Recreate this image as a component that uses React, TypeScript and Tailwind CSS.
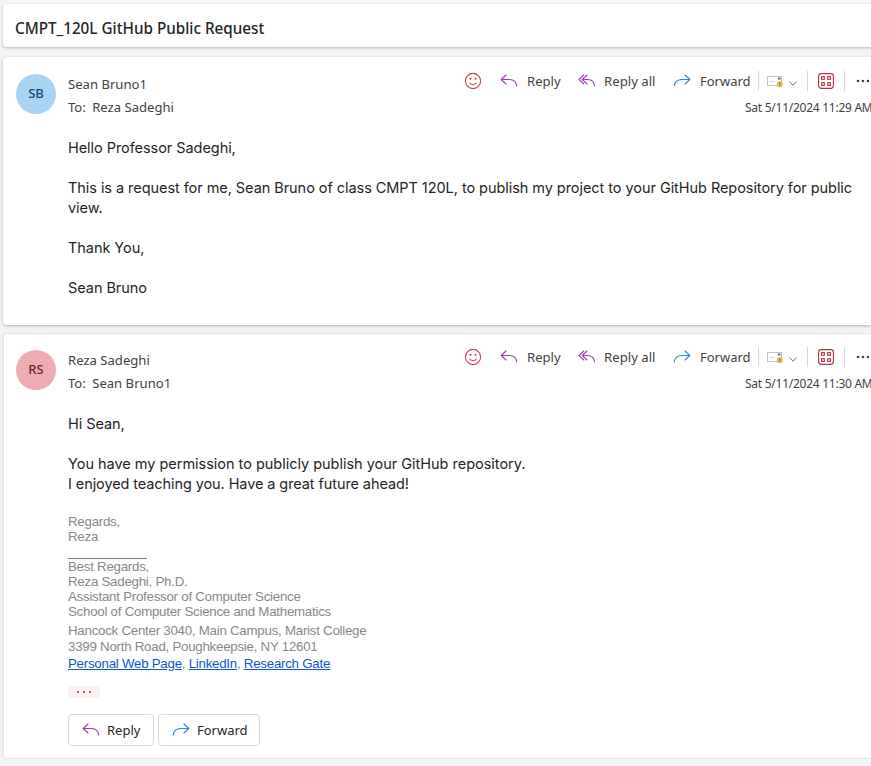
import type { ReactNode } from "react";

const ui = "font-['Noto_Sans','Open_Sans',sans-serif]";

function ReplyIcon({ all = false }: { all?: boolean }) {
  return (
    <svg className="block h-[14px] w-[18px] shrink-0 overflow-visible" viewBox="0 0 18 14" fill="none" stroke="#9b3fb0" strokeWidth="1.1" strokeLinecap="round" strokeLinejoin="round">
      {all ? (
        <>
          <path d="M5.800 1 1 5.500 5.800 10" />
          <path d="M9 1 4.300 5.500 9 10M4.500 5.500h5.300c3.900 0 6.200 2.200 6.700 6.500" />
        </>
      ) : (
        <path d="M6 1 1.200 5.500 6 10M1.500 5.500h8c4.200 0 6.700 2.200 7.200 6.500" />
      )}
    </svg>
  );
}

function ForwardIcon() {
  return (
    <svg className="block h-[14px] w-[18px] shrink-0" viewBox="0 0 18 14" fill="none" stroke="#2b88d8" strokeWidth="1.1" strokeLinecap="round" strokeLinejoin="round">
      <path d="M12 1l4.800 4.500L12 10M16.500 5.500H9c-4.300 0-7.300 2.200-7.800 6.500" />
    </svg>
  );
}

function Toolbar() {
  return (
    <div className="flex h-6 items-center pl-px text-[#424242]">
      <svg className="block size-[18px]" viewBox="0 0 18 18" fill="none" stroke="#c4444a" strokeWidth="1.1" strokeLinecap="round">
        <circle cx="9" cy="9" r="7.6" />
        <path d="M5.700 11c1.700 2.100 4.900 2.100 6.600 0" />
        <circle cx="6.500" cy="6.800" r=".5" fill="#c4444a" />
        <circle cx="11.500" cy="6.800" r=".5" fill="#c4444a" />
      </svg>
      <div className="ml-[18px] flex w-[78px] items-center">
        <ReplyIcon />
        <span className="ml-[9px] pt-[2px] text-[13.1px]">Reply</span>
      </div>
      <div className="flex w-[95px] items-center">
        <ReplyIcon all />
        <span className="ml-[8px] whitespace-nowrap pt-[2px] text-[13.2px]">Reply all</span>
      </div>
      <div className="flex w-[85px] items-center">
        <ForwardIcon />
        <span className="ml-[9px] pt-[2px] text-[13px]">Forward</span>
      </div>
      <div className="h-5 w-px bg-[#d6d6d6]" />
      <svg className="ml-2 block h-[14px] w-4" viewBox="0 0 16 14" fill="none">
        <rect x=".5" y="2.500" width="14" height="9" fill="#fff" stroke="#c4c4c4" />
        <path d="M3 7.500h5" stroke="#d8d8d8" />
        <rect x="11" y="3.500" width="2.500" height="2" fill="#4a6f9e" />
        <circle cx="12.800" cy="10.300" r="3" fill="#edbb55" />
        <path d="M12.800 8.500v2.200M12.800 11.500v.6" stroke="#7a5a20" />
      </svg>
      <svg className="ml-[6px] mt-[4px] block h-[5px] w-2" viewBox="0 0 8 5" fill="none" stroke="#777" strokeLinecap="round" strokeLinejoin="round"><path d="m.6.7 3.400 3.500L7.400.7" /></svg>
      <div className="ml-[10px] h-5 w-px bg-[#d6d6d6]" />
      <svg className="ml-[10px] block size-4" viewBox="0 0 16 16" fill="none" stroke="#bd3038" strokeWidth="1.100">
        <rect x=".6" y=".6" width="14.800" height="14.800" rx="2.800" />
        <rect x="3.600" y="3.600" width="2.700" height="2.700" />
        <rect x="9.700" y="3.600" width="2.700" height="2.700" />
        <rect x="3.600" y="9.700" width="2.700" height="2.700" />
        <rect x="9.700" y="9.700" width="2.700" height="2.700" />
      </svg>
      <div className="ml-[10px] h-5 w-px bg-[#d6d6d6]" />
      <svg className="ml-[11px] block h-1 w-[14px] shrink-0" viewBox="0 0 14 4" fill="#424242"><circle cx="2" cy="2" r="1.300" /><circle cx="7" cy="2" r="1.300" /><circle cx="12" cy="2" r="1.300" /></svg>
    </div>
  );
}

type MessageProps = { initials: string; avatar: string; from: string; to: string; date: string; card: string; children: ReactNode };

function Message({ initials, avatar, from, to, date, card, children }: MessageProps) {
  return (
    <article className={`bg-white ${card}`}>
      <header className="flex h-[52px] items-start">
        <div className={`mt-[5px] flex size-10 shrink-0 items-center justify-center rounded-full text-[13px] font-medium ${ui} ${avatar}`}>{initials}</div>
        <div className={`ml-3 mt-[4px] flex-1 text-[13.1px] leading-[23px] text-[#424242] ${ui}`}>
          <p>{from}</p>
          <p>To: <span className="ml-[3px]">{to}</span></p>
        </div>
        <div className={`flex w-[408px] shrink-0 flex-col ${ui}`}>
          <Toolbar />
          <time className="ml-[282px] mt-[5px] whitespace-nowrap text-[12px] leading-5 tracking-[-0.26px] text-[#424242]">{date}</time>
        </div>
      </header>
      <div className="ml-[52px] mt-[17px] font-['Inter','Noto_Sans',sans-serif] text-[14.5px] leading-5 tracking-[-0.055px] text-[#242424]">{children}</div>
    </article>
  );
}

export default function App() {
  return (
    <main className="h-[766px] w-[871px] overflow-hidden bg-[#f3f3f3] pl-[3px] pt-1">
      <section className={`flex h-[43px] items-center rounded-l bg-white pl-3 pt-[5px] text-[15.25px] font-medium text-[#242424] shadow-[0_1px_3px_rgba(0,0,0,0.24)] ${ui}`}>
        <h1 className="whitespace-nowrap">CMPT_120L GitHub Public Request</h1>
      </section>
      <div className="mt-[10px]">
        <Message initials="SB" avatar="bg-[#a9d3f2] text-[#104a7a]" from="Sean Bruno1" to="Reza Sadeghi" date="Sat 5/11/2024 11:29 AM" card="h-[268px] rounded-l pl-[13px] pt-3 shadow-[0_1px_3px_rgba(0,0,0,0.28)]">
          <p>Hello Professor Sadeghi,</p>
          <p className="mt-5 whitespace-nowrap">This is a request for me, Sean Bruno of class CMPT 120L, to publish my project to your GitHub Repository for public<br />view.</p>
          <p className="mt-5">Thank You,</p>
          <p className="mt-5">Sean Bruno</p>
        </Message>
      </div>
      <div className="mt-2">
        <Message initials="RS" avatar="bg-[#eeacb2] text-[#751d2b]" from="Reza Sadeghi" to="Sean Bruno1" date="Sat 5/11/2024 11:30 AM" card="h-[426px] rounded-l border border-r-0 border-[#e5e5e5] pl-3 pt-[11px]">
          <p>Hi Sean,</p>
          <p className="mt-5 whitespace-nowrap"><span className="tracking-[-0.02px]">You have my permission to publicly publish your GitHub repository.</span><br /><span className="tracking-[-0.09px]">I enjoyed teaching you. Have a great future ahead!</span></p>
          <div className="mt-5 font-['Liberation_Sans',Arial,sans-serif] text-[13.3px] leading-[15px] tracking-[-0.25px] text-[#888]">
            <p>Regards,</p>
            <p>Reza</p>
            <div className="h-[15px] w-[79px] pt-[14px]"><div className="h-px bg-[#777]" /></div>
            <p>Best Regards,</p>
            <p>Reza Sadeghi, Ph.D.</p>
            <p>Assistant Professor of Computer Science</p>
            <p>School of Computer Science and Mathematics</p>
            <p className="mt-1">Hancock Center 3040, Main Campus, Marist College</p>
            <p className="mt-px">3399 North Road, Poughkeepsie, NY 12601</p>
            <p className="mt-[2px]"><a className="text-[#1155cc] underline">Personal Web Page</a>, <a className="text-[#1155cc] underline">LinkedIn</a>, <a className="text-[#1155cc] underline">Research Gate</a></p>
          </div>
          <button className="mt-[15px] flex h-3 w-8 items-center justify-center gap-1 rounded-sm bg-[#fdf0f1]">
            <span className="size-[2px] bg-[#a86268]" /><span className="size-[2px] bg-[#a86268]" /><span className="size-[2px] bg-[#a86268]" />
          </button>
          <div className={`mt-4 flex gap-1 text-[13px] tracking-normal ${ui}`}>
            <button className="flex h-8 w-[86px] items-center rounded border border-[#d9d9d9] pl-[13px]"><ReplyIcon /><span className="ml-[7px]">Reply</span></button>
            <button className="flex h-8 w-[102px] items-center rounded border border-[#d9d9d9] pl-[13px]"><ForwardIcon /><span className="ml-[7px]">Forward</span></button>
          </div>
        </Message>
      </div>
    </main>
  );
}
